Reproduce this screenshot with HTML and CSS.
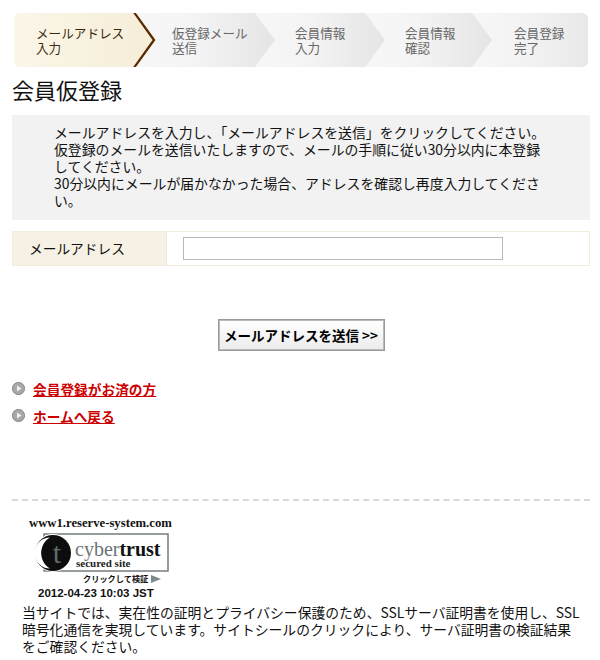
FILE: index.html
```html
<!DOCTYPE html>
<html lang="ja">
<head>
<meta charset="utf-8">
<title>会員仮登録</title>
<link rel="stylesheet" href="styles.css">
</head>
<body>
<div class="page">
  <ol class="steps">
    <li class="step step-1 current"><span>メールアドレス<br>入力</span>
      <svg class="tip" width="24" height="54" viewBox="0 0 24 54"><path d="M1 -1 L21 27 L1 55" fill="none" stroke="#5a2c06" stroke-width="2.4"/></svg>
    </li>
    <li class="step step-2"><span>仮登録メール<br>送信</span></li>
    <li class="step step-3"><span>会員情報<br>入力</span></li>
    <li class="step step-4"><span>会員情報<br>確認</span></li>
    <li class="step step-5"><span>会員登録<br>完了</span></li>
  </ol>
  <h1 class="title">会員仮登録</h1>
  <div class="notice">
    <p>メールアドレスを入力し、「メールアドレスを送信」をクリックしてください。<br>仮登録のメールを送信いたしますので、メールの手順に従い30分以内に本登録<br>してください。<br>30分以内にメールが届かなかった場合、アドレスを確認し再度入力してくださ<br>い。</p>
  </div>
  <div class="form-row">
    <label class="form-label" for="mail">メールアドレス</label>
    <div class="form-field"><input id="mail" class="input" type="text"></div>
  </div>
  <div class="actions"><button class="submit" type="button">メールアドレスを送信 &gt;&gt;</button></div>
  <ul class="links">
    <li><svg class="bullet" width="13" height="13" viewBox="0 0 13 13"><circle cx="6.5" cy="6.5" r="6.5" fill="#a8a8a8"/><circle cx="6.5" cy="6.5" r="6" fill="none" stroke="#8e8e8e"/><path d="M5 3.5 L9.5 6.5 L5 9.5 Z" fill="#f2f2f2"/></svg><a href="#">会員登録がお済の方</a></li>
    <li><svg class="bullet" width="13" height="13" viewBox="0 0 13 13"><circle cx="6.5" cy="6.5" r="6.5" fill="#a8a8a8"/><circle cx="6.5" cy="6.5" r="6" fill="none" stroke="#8e8e8e"/><path d="M5 3.5 L9.5 6.5 L5 9.5 Z" fill="#f2f2f2"/></svg><a href="#">ホームへ戻る</a></li>
  </ul>
  <footer class="footer">
    <div class="seal">
      <div class="seal-host">www1.reserve-system.com</div>
      <svg class="seal-logo" width="136" height="40" viewBox="0 0 136 40">
        <rect x="10" y="1" width="124" height="37" fill="#fff" stroke="#6b7476" stroke-width="1.4"/>
        <circle cx="19" cy="20" r="19" fill="#fff"/>
        <circle cx="19" cy="20" r="18" fill="#0d0d0d"/>
        <path d="M16 4.5 A15.5 15.5 0 0 0 16 35.5 A18 18 0 0 1 16 4.5 Z" fill="#fff"/>
        <text x="23" y="30" class="seal-t">t</text>
        <text x="41" y="23" class="seal-cyber">cyber<tspan class="seal-trust">trust</tspan></text>
        <text x="42" y="34" class="seal-site">secured site</text>
      </svg>
      <div class="seal-verify">クリックして検証<svg width="10" height="8" viewBox="0 0 10 8"><path d="M0 0 L10 4 L0 8 Z" fill="#7d8a8c"/></svg></div>
      <div class="seal-date">2012-04-23 10:03 JST</div>
    </div>
    <p class="footer-text">当サイトでは、実在性の証明とプライバシー保護のため、SSLサーバ証明書を使用し、SSL<br>暗号化通信を実現しています。サイトシールのクリックにより、サーバ証明書の検証結果<br>をご確認ください。</p>
  </footer>
</div>
</body>
</html>
```

FILE: styles.css
```css
* { box-sizing: border-box; }
html, body { margin: 0; padding: 0; background: #fff; }
body {
  font-family: "Noto Sans CJK JP", "Liberation Sans", sans-serif;
  color: #111;
  width: 600px;
  height: 660px;
  overflow: hidden;
}
.page { padding: 13px 10px 0 12px; }

.steps {
  list-style: none;
  margin: 0 0 0 2px;
  padding: 0;
  display: flex;
  width: 574px;
  height: 54px;
  border-radius: 6px;
  overflow: hidden;
  background: #f4f4f4;
}
.step {
  position: relative;
  flex: none;
  height: 54px;
  font-size: 12.6px;
  line-height: 15.5px;
  color: #666;
  display: flex;
  align-items: center;
  clip-path: polygon(0 0, calc(100% - 20px) 0, 100% 50%, calc(100% - 20px) 100%, 0 100%);
  background: linear-gradient(90deg, #f7f7f7 0%, #f4f4f4 40%, #e5e5e5 100%);
}
.step span { display: block; }
.current {
  color: #3a2a10;
  background: linear-gradient(90deg, #fbf6e8 0%, #f5edd8 100%);
}
.step-1 { width: 142px; padding-left: 22px; z-index: 5; }
.step-2 { width: 135px; margin-left: -16px; padding-left: 32px; z-index: 4; }
.step-3 { width: 129px; margin-left: -19px; padding-left: 39px; z-index: 3; }
.step-4 { width: 127px; margin-left: -20px; padding-left: 40px; z-index: 2; }
.step-5 {
  flex: 1;
  margin-left: -20px;
  padding-left: 42px;
  clip-path: none;
  z-index: 1;
  background: linear-gradient(90deg, #f7f7f7 0%, #f2f2f2 50%, #e8e8e8 100%);
}
.tip { position: absolute; right: -1px; top: 0; }

.title {
  margin: 6px 0 10px;
  font-size: 22px;
  line-height: 32px;
  font-weight: 400;
  color: #111;
}
.notice {
  background: #f2f2f2;
  height: 105px;
  padding: 9px 40px 0 42px;
}
.notice p {
  margin: 0;
  font-size: 13.87px;
  line-height: 17px;
  white-space: nowrap;
}
.form-row {
  display: flex;
  height: 35px;
  margin-top: 11px;
  border: 1px solid #f3eddc;
}
.form-label {
  width: 154px;
  background: #f6f1e4;
  border-right: 1px solid #f0e9d6;
  font-size: 13.7px;
  line-height: 33px;
  padding-left: 16px;
}
.form-field { flex: 1; display: flex; align-items: center; padding-left: 16px; }
.input {
  width: 320px;
  height: 23px;
  border: 1px solid #b5b8bd;
  background: #fff;
  padding: 0;
  margin: 0;
}
.actions { display: flex; justify-content: center; margin-top: 53px; }
.submit {
  width: 167px;
  height: 32px;
  padding: 0;
  border: 2px solid #b9b9b9;
  outline: 1px solid #9a9a9a;
  outline-offset: -1px;
  background: linear-gradient(180deg, #fff 0%, #ececec 100%);
  font-family: inherit;
  font-size: 13.5px;
  font-weight: 700;
  color: #000;
  white-space: nowrap;
}
.links {
  list-style: none;
  margin: 24px 0 0;
  padding: 0;
}
.links li {
  display: flex;
  align-items: center;
  gap: 8px;
  height: 27px;
}
.links a {
  color: #cc0000;
  font-size: 13.7px;
  font-weight: 700;
  text-decoration: underline;
}
.footer {
  margin-top: 70px;
  border-top: 2px dashed #d8d8d8;
  padding-top: 15px;
}
.seal { width: 170px; margin-left: 10px; height: 88px; display: flex; flex-direction: column; }
.seal-host {
  font-family: "Liberation Serif", serif;
  font-weight: 700;
  font-size: 12.7px;
  line-height: 14px;
  white-space: nowrap;
  margin-left: 7px;
}
.seal-logo { display: block; margin: 3px 0 0 12px; flex: none; }
.seal-t { font-family: "Liberation Serif", serif; font-size: 30px; fill: #5f6b6d; text-anchor: middle; }
.seal-cyber { font-family: "Liberation Serif", serif; font-size: 20px; fill: #6b7476; }
.seal-trust { fill: #111; font-weight: 700; }
.seal-site { font-family: "Liberation Serif", serif; font-size: 11px; font-weight: 700; fill: #222; }
.seal-verify {
  font-size: 8.2px;
  line-height: 11px;
  font-weight: 700;
  margin-left: 61px;
  display: flex;
  align-items: center;
  gap: 3px;
  white-space: nowrap;
}
.seal-date {
  font-family: "Liberation Sans", sans-serif;
  font-size: 11.5px;
  font-weight: 700;
  line-height: 13px;
  margin: 3px 0 0 16px;
  white-space: nowrap;
}
.footer-text {
  margin: 0 0 0 10px;
  font-size: 13.8px;
  line-height: 17px;
  white-space: nowrap;
}
```
